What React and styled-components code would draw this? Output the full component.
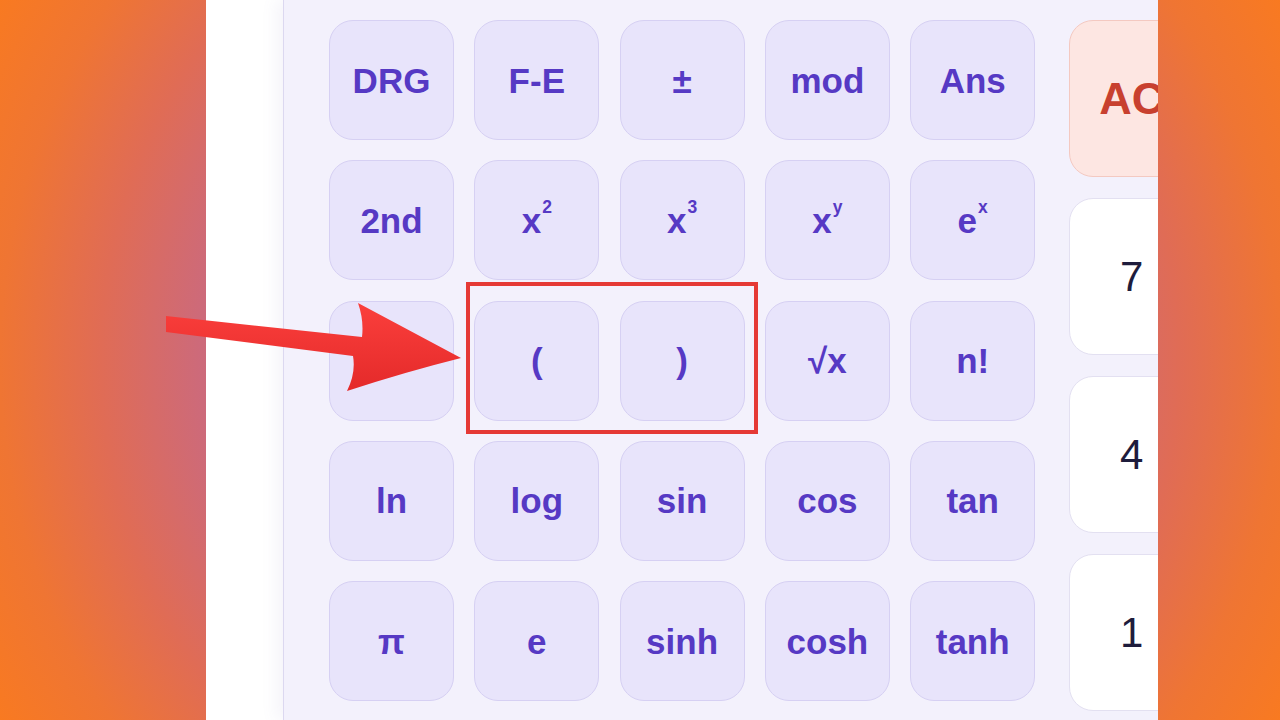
import React from 'react';
import styled, { createGlobalStyle } from 'styled-components';

const GlobalStyle = createGlobalStyle`
  html, body {
    margin: 0;
    padding: 0;
    height: 720px;
    overflow: hidden;
  }
  body {
    background: radial-gradient(circle at 50% 50%, #a85ca8 0px, #cd6a7a 440px, #e06c55 540px, #ef7533 640px, #fb7b1c 760px);
    font-family: "Liberation Sans", Arial, sans-serif;
  }
`;

const Stage = styled.div`
  position: relative;
  width: 1280px;
  height: 720px;
  display: flex;
  padding: 0 122px 0 206px;
  box-sizing: border-box;
`;

const Frame = styled.div`
  flex: 1;
  display: flex;
  background: #ffffff;
  overflow: hidden;
  padding-left: 77px;
`;

const Card = styled.div`
  flex-shrink: 0;
  display: flex;
  gap: 34px;
  padding: 20px 0 0 45px;
  background: #f3f1fc;
  border-left: 1px solid #dcd8f0;
  box-shadow: -8px 0 14px rgba(130, 110, 190, 0.07);
  width: 1000px;
`;

const SciGrid = styled.div`
  display: grid;
  grid-template-columns: repeat(5, 125px);
  grid-auto-rows: 120px;
  column-gap: 20.3px;
  row-gap: 20.3px;
`;

const Key = styled.button`
  box-sizing: border-box;
  display: flex;
  align-items: center;
  justify-content: center;
  padding: 0;
  margin: 0;
  border-radius: 24px;
  font-family: "Liberation Sans", Arial, sans-serif;
  line-height: 1;
  cursor: pointer;
`;

const SciKey = styled(Key)`
  background: #e8e4fb;
  border: 1.5px solid #d6d0f3;
  color: #5639c4;
  font-size: 35px;
  font-weight: 700;
`;

const Sup = styled.span`
  font-size: 0.5em;
  position: relative;
  top: -0.72em;
  margin-left: 1px;
`;

const NumCol = styled.div`
  display: flex;
  flex-direction: column;
  gap: 21px;
  width: 125px;
`;

const NumKey = styled(Key)`
  height: 157px;
  background: ${({ danger }) => (danger ? '#fde6e2' : '#ffffff')};
  border: 1.5px solid ${({ danger }) => (danger ? '#f4c9c1' : '#e3e0f1')};
  color: ${({ danger }) => (danger ? '#c8402f' : '#1e1c3c')};
  font-size: ${({ danger }) => (danger ? '45px' : '42px')};
  font-weight: ${({ danger }) => (danger ? 700 : 400)};
`;

const Highlight = styled.div`
  position: absolute;
  left: 466px;
  top: 282px;
  width: 292px;
  height: 152px;
  box-sizing: border-box;
  border: 4px solid #e53935;
  pointer-events: none;
`;

const ArrowLayer = styled.svg`
  position: absolute;
  left: 0;
  top: 0;
  pointer-events: none;
`;

const sci = [
  ['DRG'], ['F-E'], ['±'], ['mod'], ['Ans'],
  ['2nd'], ['x', '2'], ['x', '3'], ['x', 'y'], ['e', 'x'],
  [''], ['('], [')'], ['√x'], ['n!'],
  ['ln'], ['log'], ['sin'], ['cos'], ['tan'],
  ['π'], ['e'], ['sinh'], ['cosh'], ['tanh'],
];

const App = () => {
  return (
    <>
      <GlobalStyle />
      <Stage>
        <Frame>
          <Card>
            <SciGrid>
              {sci.map(([base, sup], i) => (
                <SciKey key={i}>
                  {base}
                  {sup && <Sup>{sup}</Sup>}
                </SciKey>
              ))}
            </SciGrid>
            <NumCol>
              <NumKey danger>AC</NumKey>
              <NumKey>7</NumKey>
              <NumKey>4</NumKey>
              <NumKey>1</NumKey>
            </NumCol>
          </Card>
        </Frame>

        <Highlight />

        <ArrowLayer width="1280" height="720" viewBox="0 0 1280 720">
          <defs>
            <linearGradient id="arrowFill" x1="0" y1="0" x2="0" y2="1">
              <stop offset="0" stopColor="#fb3f3c" />
              <stop offset="1" stopColor="#e42a2a" />
            </linearGradient>
          </defs>
          <path
            d="M166 316 L362 337 Q364 320 358 303 L461 358 Q405 372 347 391 Q356 373 353 356 L166 332 Z"
            fill="url(#arrowFill)"
          />
        </ArrowLayer>
      </Stage>
    </>
  );
};

export default App;
